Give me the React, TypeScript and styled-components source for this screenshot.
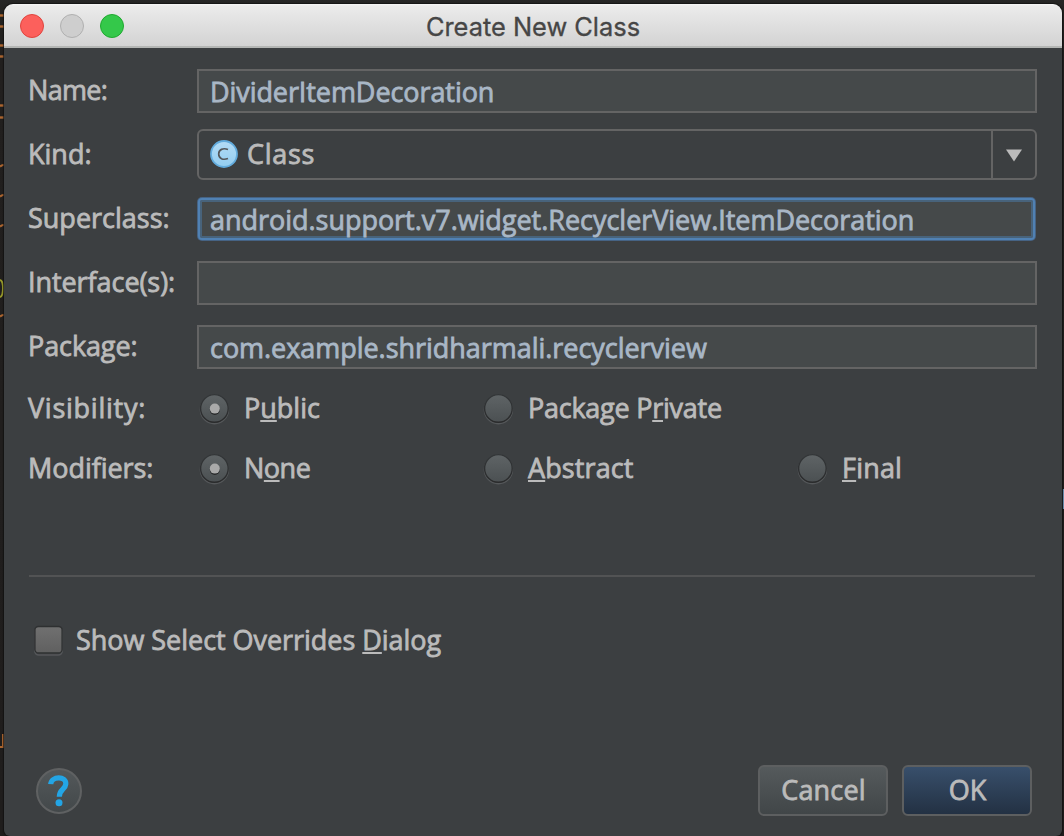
import React from 'react';
import styled, { createGlobalStyle, css } from 'styled-components';

const Global = createGlobalStyle`
  *, *::before, *::after { box-sizing: border-box; }
  body { margin: 0; background: #211f1e; overflow: hidden; }
`;

const uiFont = '"Open Sans", "Noto Sans", sans-serif';

const Desktop = styled.div`
  position: relative;
  width: 1064px;
  height: 836px;
  padding: 4px 2px 0 4px;
  background: linear-gradient(#262626 0, #232220 12px, #211f1e 60px, #1f1d1c 100%);
  overflow: hidden;
`;

const EditorBehind = styled.svg`
  position: absolute;
  inset: 0;
`;

const Dialog = styled.div`
  position: relative;
  display: flex;
  flex-direction: column;
  height: 832px;
  border-radius: 9px 9px 6px 6px;
  background: #3c3f41;
  overflow: hidden;
  box-shadow: 0 0 1px 1px rgba(14, 14, 14, 0.7);
`;

const TitleBar = styled.div`
  position: relative;
  flex: none;
  display: flex;
  align-items: center;
  justify-content: center;
  height: 44px;
  background: linear-gradient(#f6f6f6 0, #ebebeb 2px, #d3d3d3 42px);
  border-bottom: 2px solid #b4b6b4;
`;

const TrafficLights = styled.div`
  position: absolute;
  left: 16px;
  top: 10px;
  display: flex;
  gap: 16px;
`;

const Light = styled.span<{ $fill: string; $edge: string }>`
  width: 24px;
  height: 24px;
  border-radius: 50%;
  background: ${p => p.$fill};
  border: 1px solid ${p => p.$edge};
`;

const Title = styled.h1`
  margin: 4px 0 0;
  font: 400 25.4px/30px Inter, sans-serif;
  color: #464646;
  -webkit-text-stroke: 0.3px #464646;
`;

const Body = styled.div`
  flex: 1;
  display: flex;
  flex-direction: column;
  padding: 11px 25px 0 24px;
`;

const Text = styled.span<{ $ls?: number; $color?: string }>`
  font: 400 27px/36px ${uiFont};
  letter-spacing: ${p => p.$ls ?? 0}px;
  color: ${p => p.$color ?? '#bbbbbb'};
  -webkit-text-stroke: 0.8px ${p => p.$color ?? '#bbbbbb'};
  white-space: nowrap;
`;

const LabelText = styled(Text)`
  padding-bottom: 2px;
`;

const Mnemonic = styled.u`
  text-decoration: underline;
  text-decoration-thickness: 2px;
  text-underline-offset: 2px;
  text-decoration-skip-ink: none;
`;

const FieldRow = styled.div`
  display: grid;
  grid-template-columns: 169px 1fr;
  align-items: center;
  height: 64px;
`;

const Field = styled.div<{ $focused?: boolean }>`
  display: flex;
  align-items: center;
  height: 44px;
  padding: 1px 0 0 11px;
  background: #45494a;
  border: 2px solid #646464;
  ${p =>
    p.$focused &&
    css`
      height: 42px;
      margin: 0 2px 0 1px;
      padding: 1px 0 0 10px;
      border-color: #5081b3;
      border-radius: 4px;
      box-shadow: 0 0 0 1px #466384, inset 0 0 0 2px #48637b;
    `}
`;

const Combo = styled.div`
  display: flex;
  align-items: stretch;
  height: 51px;
  margin-bottom: 1px;
  border: 2px solid #646464;
  border-radius: 6px;
`;

const ComboValue = styled.div`
  flex: 1;
  display: flex;
  align-items: center;
  gap: 9px;
  padding: 0 0 1px 11px;
`;

const ComboArrow = styled.div`
  display: flex;
  align-items: center;
  width: 44px;
  padding: 2px 0 0 12px;
  border-left: 2px solid #646464;
`;

const RadioRow = styled.div`
  display: grid;
  grid-template-columns: 170px 284px 314px 1fr;
  align-items: center;
  height: 60px;
`;

const RadioOption = styled.div`
  display: flex;
  align-items: center;
  gap: 14px;
`;

const Separator = styled.hr`
  width: 1006px;
  height: 2px;
  margin: 76px 0 0 1px;
  border: 0;
  background: #525354;
`;

const CheckRow = styled.div`
  display: flex;
  align-items: center;
  gap: 11px;
  height: 60px;
  margin-top: 34px;
  padding-left: 5px;
`;

const Footer = styled.div`
  display: flex;
  align-items: center;
  gap: 14px;
  height: 51px;
  margin: auto 5.5px 20px 7.5px;
`;

const Spacer = styled.div`
  flex: 1;
`;

const Help = styled.div`
  display: flex;
  align-items: center;
  justify-content: center;
  width: 46px;
  height: 46px;
  border: 2px solid #5f6162;
  border-radius: 50%;
  background: linear-gradient(#53585a, #43484a);
`;

const Button = styled.div<{ $primary?: boolean }>`
  display: flex;
  align-items: center;
  justify-content: center;
  width: 130px;
  height: 51px;
  padding: 0 0 1px 2px;
  border: 2px solid #5d5f60;
  border-radius: 6px;
  background: ${p => (p.$primary ? 'linear-gradient(#384f6b, #233143)' : 'linear-gradient(#555a5c, #414648)')};
`;

function Radio({ on, id }: { on?: boolean; id: string }) {
  return (
    <svg width="32" height="34" viewBox="0 0 32 34">
      <defs>
        <linearGradient id={id} x1="0" y1="0" x2="0" y2="1">
          <stop offset="0" stopColor="#5f6466" />
          <stop offset="1" stopColor="#4b5052" />
        </linearGradient>
        <linearGradient id={id + 'e'} x1="0" y1="0" x2="0" y2="1">
          <stop offset="0" stopColor="#333638" />
          <stop offset="1" stopColor="#2a2b2c" />
        </linearGradient>
      </defs>
      <circle cx="16.4" cy="17.700" r="14" fill="none" stroke="#55585a" strokeWidth="1.4" />
      <circle cx="16.4" cy="16.4" r="13.8" fill={`url(#${id})`} stroke={`url(#${id}e)`} strokeWidth="1.4" />
      {on && <circle cx="16.8" cy="18" r="5" fill="#282a2b" />}
      {on && <circle cx="16.8" cy="16.6" r="5" fill="#aaaaaa" />}
    </svg>
  );
}

function Checkbox() {
  return (
    <svg width="32" height="34" viewBox="0 0 32 34">
      <defs>
        <linearGradient id="check" x1="0" y1="0" x2="0" y2="1">
          <stop offset="0" stopColor="#707070" />
          <stop offset="1" stopColor="#606060" />
        </linearGradient>
      </defs>
      <rect x="1.8" y="4" width="27.4" height="27" rx="4" fill="none" stroke="#55575a" strokeWidth="1.6" />
      <rect x="1.9" y="2.500" width="27.2" height="26.4" rx="3.5" fill="url(#check)" stroke="#2e3031" strokeWidth="1.4" />
    </svg>
  );
}

function ClassIcon() {
  return (
    <svg width="28" height="28" viewBox="0 0 28 28">
      <defs>
        <linearGradient id="cls" x1="0" y1="0" x2="0" y2="1">
          <stop offset="0" stopColor="#b3dcf6" />
          <stop offset="1" stopColor="#93cdf0" />
        </linearGradient>
      </defs>
      <circle cx="14" cy="14" r="13" fill="url(#cls)" stroke="#62abdc" strokeWidth="1.8" />
      <path d="M18 9.5C13 7.6 8.700 9.600 8.700 14C8.700 18.600 13 20.400 18 18.500" fill="none" stroke="#54585b" strokeWidth="1.7" />
    </svg>
  );
}

function LabeledField({ label, ls, value, valueLs, focused }: { label: string; ls: number; value?: string; valueLs?: number; focused?: boolean }) {
  return (
    <FieldRow>
      <LabelText $ls={ls}>{label}</LabelText>
      <Field $focused={focused}>{value && <Text $ls={valueLs} $color="#a9b7c6">{value}</Text>}</Field>
    </FieldRow>
  );
}

const bars = [15, 26, 45, 56, 105, 117];
const arches = [165, 195, 225, 315];

export default function App() {
  return (
    <>
      <Global />
      <Desktop>
        <EditorBehind width="1064" height="836">
          {bars.map(y => (
            <path key={y} d={`M0 ${y + 0.5}H4`} stroke="#ac6630" strokeWidth="2.4" />
          ))}
          {arches.map(y => (
            <path key={y} d={`M0 ${y + 1.5}Q2 ${y} 4 ${y}`} fill="none" stroke="#ac6630" strokeWidth="2.2" />
          ))}
          <path d="M0 280C4 281 4 296 0 297" fill="none" stroke="#97992a" strokeWidth="2" />
          <path d="M3 734V747H0" fill="none" stroke="#ac6630" strokeWidth="2" />
          <path d="M1063.500 489V509" stroke="#6d93b4" strokeWidth="1.4" />
        </EditorBehind>
        <Dialog>
          <TitleBar>
            <TrafficLights>
              <Light $fill="#fc605c" $edge="#e0443e" />
              <Light $fill="#cecece" $edge="#b0b0b0" />
              <Light $fill="#34c84a" $edge="#1fa92f" />
            </TrafficLights>
            <Title>Create New Class</Title>
          </TitleBar>
          <Body>
            <LabeledField label="Name:" ls={-0.7} value="DividerItemDecoration" valueLs={-0.08} />
            <FieldRow>
              <LabelText $ls={0}>Kind:</LabelText>
              <Combo>
                <ComboValue>
                  <ClassIcon />
                  <Text $ls={0.7}>Class</Text>
                </ComboValue>
                <ComboArrow>
                  <svg width="18" height="13" viewBox="0 0 18 13">
                    <path d="M1 0.500H17L9 12.500Z" fill="#bbbbbb" />
                  </svg>
                </ComboArrow>
              </Combo>
            </FieldRow>
            <LabeledField label="Superclass:" ls={0} value="android.support.v7.widget.RecyclerView.ItemDecoration" valueLs={-0.03} focused />
            <LabeledField label="Interface(s):" ls={-0.07} />
            <LabeledField label="Package:" ls={-0.1} value="com.example.shridharmali.recyclerview" valueLs={-0.04} />
            <RadioRow>
              <LabelText $ls={0.75}>Visibility:</LabelText>
              <RadioOption>
                <Radio on id="public" />
                <LabelText $ls={0}>P<Mnemonic>u</Mnemonic>blic</LabelText>
              </RadioOption>
              <RadioOption>
                <Radio id="private" />
                <LabelText $ls={-0.25}>Package P<Mnemonic>r</Mnemonic>ivate</LabelText>
              </RadioOption>
            </RadioRow>
            <RadioRow>
              <LabelText $ls={-0.05}>Modifiers:</LabelText>
              <RadioOption>
                <Radio on id="none" />
                <LabelText $ls={-0.5}>N<Mnemonic>o</Mnemonic>ne</LabelText>
              </RadioOption>
              <RadioOption>
                <Radio id="abstract" />
                <LabelText $ls={0.1}><Mnemonic>A</Mnemonic>bstract</LabelText>
              </RadioOption>
              <RadioOption>
                <Radio id="final" />
                <LabelText $ls={0.2}><Mnemonic>F</Mnemonic>inal</LabelText>
              </RadioOption>
            </RadioRow>
            <Separator />
            <CheckRow>
              <Checkbox />
              <LabelText $ls={-0.04}>Show Select Overrides <Mnemonic>D</Mnemonic>ialog</LabelText>
            </CheckRow>
            <Footer>
              <Help>
                <svg width="22" height="34" viewBox="0 0 22 34">
                  <path d="M2.700 10.200C3.200 2 18.300 1.500 17.800 10C17.500 15.200 11.200 15.500 11.300 22.800" fill="none" stroke="#23a5e5" strokeWidth="5.2" />
                  <circle cx="11" cy="28.700" r="3.500" fill="#23a5e5" />
                </svg>
              </Help>
              <Spacer />
              <Button><Text $ls={0.15}>Cancel</Text></Button>
              <Button $primary><Text $ls={0}>OK</Text></Button>
            </Footer>
          </Body>
        </Dialog>
      </Desktop>
    </>
  );
}
